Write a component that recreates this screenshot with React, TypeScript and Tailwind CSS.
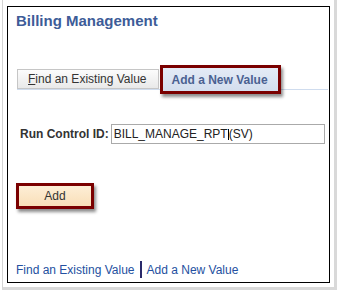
export default function App() {
  return (
    <div className="h-[290px] w-[337px] bg-white font-['Liberation_Sans',Arial,sans-serif]">
      <div className="ml-[2px] h-[290px] w-[335px] border-l border-b-[3px] border-r-[3px] border-l-[#d4d4d4] border-b-[#d9d9d9] border-r-[#d9d9d9] pl-[4px] pt-[6px]">
        <div className="flex h-[277px] w-[323px] flex-col border border-black">
          <h1 className="ml-[8px] mt-[5px] text-[15px] font-bold leading-[18px] text-[#3d5c98]">
            Billing Management
          </h1>

          {/* tabs */}
          <div className="ml-[9px] mt-[35px] flex h-[25px] w-[311px] items-start border-b border-[#cfdcee]">
            <div className="mt-[4px] flex h-[20px] items-center border border-[#c6c6c6] bg-gradient-to-b from-[#fcfcfc] to-[#e9e9e9] pl-[10px] pr-[11px] text-[12px] leading-[14px] text-[#333]">
              <span>
                <span className="underline">F</span>ind an Existing Value
              </span>
            </div>
            <div className="relative z-10 ml-[1px] h-[29px] border-[3px] border-[#7a0000] shadow-[2px_3px_3px_rgba(0,0,0,0.45)]">
              <div className="flex h-full items-center bg-gradient-to-b from-[#e4ebf6] to-[#d3deee] pl-[9px] pr-[10px] text-[12px] font-bold leading-[14px] text-[#4a6191]">
                Add a New Value
              </div>
            </div>
          </div>

          {/* run control */}
          <div className="ml-[12px] mt-[34px] flex items-center">
            <span className="shrink-0 whitespace-nowrap text-[12px] font-bold leading-[14px] text-[#333]">
              Run Control ID:
            </span>
            <div className="ml-[2px] flex h-[20px] w-[214px] shrink-0 items-center whitespace-nowrap border border-[#aaaaaa] pl-[2px] text-[12px] leading-[14px] text-[#222]">
              BILL_MANAGE_RPT
              <span className="inline-block h-[11px] w-px bg-black" />
              (SV)
            </div>
          </div>

          {/* add button */}
          <div className="ml-[8px] mt-[39px] w-[78px] border-[3px] border-[#7a0000] shadow-[2px_3px_3px_rgba(0,0,0,0.45)]">
            <div className="flex h-[20px] items-center justify-center bg-gradient-to-b from-[#fdeed6] to-[#f9dfb8] text-[12px] leading-[14px] text-[#333]">
              Add
            </div>
          </div>

          {/* bottom links */}
          <div className="ml-[8px] mb-[4px] mt-auto flex items-center text-[12px] leading-[14px] text-[#2450a0]">
            <span>Find an Existing Value</span>
            <span className="mx-[5px] inline-block h-[17px] w-[2px] bg-[#2a2a6a]" />
            <span>Add a New Value</span>
          </div>
        </div>
      </div>
    </div>
  );
}
